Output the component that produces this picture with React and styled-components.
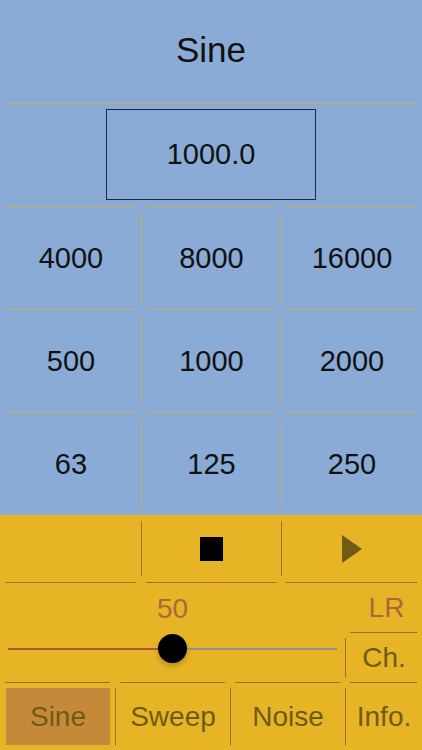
import React from "react";
import styled, { createGlobalStyle } from "styled-components";

const BLUE = "#89abd6";
const YELLOW = "#e6b425";
const TAN = "#c9ad62";
const BROWN = "#ad6839";
const OLIVE = "#6e5b16";

const GlobalStyle = createGlobalStyle`
  html, body {
    margin: 0;
    padding: 0;
    background: ${YELLOW};
  }
  body {
    font-family: "Liberation Sans", Arial, sans-serif;
  }
`;

const frequencies = [
  ["4000", "8000", "16000"],
  ["500", "1000", "2000"],
  ["63", "125", "250"],
];

const tabs = ["Sine", "Sweep", "Noise", "Info."];

const level = 50;
const trackRange = 300;

const App = () => {
  const fill = (level / 100) * trackRange;
  const thumbCenter = 8 + fill + 14.5;

  return (
    <>
      <GlobalStyle />
      <Screen>
        <FreqPanel>
          <Title>Sine</Title>
          <Line />
          <DisplayArea>
            <FreqBox>1000.0</FreqBox>
          </DisplayArea>
          {frequencies.map((row, r) => (
            <GridRow key={r}>
              {row.map((f, i) => (
                <Cell key={f}>
                  <Line />
                  <CellBody $first={i === 0}>{f}</CellBody>
                </Cell>
              ))}
            </GridRow>
          ))}
        </FreqPanel>

        <ControlPanel>
          <GridRow>
            <Cell>
              <TransportBody $first />
              <Line $dark />
            </Cell>
            <Cell>
              <TransportBody>
                <StopIcon />
              </TransportBody>
              <Line $dark />
            </Cell>
            <Cell>
              <TransportBody>
                <svg width="20" height="28" viewBox="0 0 20 28">
                  <polygon points="0,0 20,14 0,28" fill={OLIVE} />
                </svg>
              </TransportBody>
              <Line $dark />
            </Cell>
          </GridRow>

          <SliderRow>
            <LevelArea>
              <ValueLabel style={{ marginLeft: `${thumbCenter - 38}px` }}>
                {level}
              </ValueLabel>
              <Slider>
                <TrackFill style={{ width: `${fill}px` }} />
                <Thumb />
                <TrackRest />
              </Slider>
            </LevelArea>
            <ChannelArea>
              <ChannelValue>LR</ChannelValue>
              <Line $dark />
              <ChannelButton>Ch.</ChannelButton>
            </ChannelArea>
          </SliderRow>

          <TabBar>
            {tabs.map((t, i) => (
              <Tab key={t}>
                <Line $dark />
                <TabBody $first={i === 0}>
                  <TabLabel $active={i === 0}>{t}</TabLabel>
                </TabBody>
              </Tab>
            ))}
          </TabBar>
        </ControlPanel>
      </Screen>
    </>
  );
};

const Screen = styled.div`
  width: 422px;
  height: 750px;
  display: flex;
  flex-direction: column;
  overflow: hidden;
`;

const FreqPanel = styled.section`
  background: ${BLUE};
  display: flex;
  flex-direction: column;
`;

const Title = styled.h1`
  margin: 0;
  height: 103px;
  display: flex;
  align-items: center;
  justify-content: center;
  padding-bottom: 4px;
  box-sizing: border-box;
  font-size: 35px;
  font-weight: normal;
  color: #111;
`;

const Line = styled.div`
  height: 1px;
  margin: 0 5px;
  flex-shrink: 0;
  background: ${({ $dark }) => ($dark ? BROWN : TAN)};
`;

const DisplayArea = styled.div`
  height: 102px;
  padding: 5px 0 6px;
  box-sizing: border-box;
  display: flex;
  justify-content: center;
`;

const FreqBox = styled.div`
  width: 210px;
  height: 91px;
  box-sizing: border-box;
  border: 1px solid #1b2942;
  display: flex;
  align-items: center;
  justify-content: center;
  font-size: 29px;
  color: #111;
`;

const GridRow = styled.div`
  display: grid;
  grid-template-columns: 141px 140px 141px;
`;

const Cell = styled.div`
  display: flex;
  flex-direction: column;
`;

const CellBody = styled.div`
  height: 90px;
  margin: 6px 0;
  border-left: 1px solid ${({ $first }) => ($first ? "transparent" : TAN)};
  display: flex;
  align-items: center;
  justify-content: center;
  font-size: 29px;
  color: #111;
`;

const ControlPanel = styled.section`
  flex: 1;
  background: ${YELLOW};
  display: flex;
  flex-direction: column;
`;

const TransportBody = styled.div`
  height: 55px;
  margin: 6px 0;
  border-left: 1px solid ${({ $first }) => ($first ? "transparent" : BROWN)};
  display: flex;
  align-items: center;
  justify-content: center;
`;

const StopIcon = styled.div`
  width: 23px;
  height: 24px;
  background: #000;
`;

const SliderRow = styled.div`
  height: 99px;
  display: flex;
`;

const LevelArea = styled.div`
  flex: 1;
  display: flex;
  flex-direction: column;
  padding: 10px 8px 0;
`;

const ValueLabel = styled.div`
  width: 60px;
  text-align: center;
  font-size: 28px;
  line-height: 32px;
  color: ${BROWN};
`;

const Slider = styled.div`
  margin-top: 9px;
  height: 29px;
  display: flex;
  align-items: center;
`;

const TrackFill = styled.div`
  height: 2px;
  background: #b25534;
`;

const TrackRest = styled.div`
  flex: 1;
  height: 2px;
  background: #8d9189;
`;

const Thumb = styled.div`
  width: 29px;
  height: 29px;
  border-radius: 50%;
  background: #000;
  box-shadow: 0 3px 5px rgba(0, 0, 0, 0.22);
  flex-shrink: 0;
`;

const ChannelArea = styled.div`
  width: 77px;
  display: flex;
  flex-direction: column;
`;

const ChannelValue = styled.div`
  height: 49px;
  display: flex;
  align-items: center;
  justify-content: center;
  padding-left: 6px;
  font-size: 28px;
  color: ${BROWN};
`;

const ChannelButton = styled.div`
  height: 40px;
  margin: 5px 0 4px;
  border-left: 1px solid ${BROWN};
  display: flex;
  align-items: center;
  justify-content: center;
  font-size: 28px;
  color: ${OLIVE};
`;

const TabBar = styled.nav`
  display: grid;
  grid-template-columns: 115px 115px 115px 77px;
`;

const Tab = styled.div`
  display: flex;
  flex-direction: column;
`;

const TabBody = styled.div`
  height: 57px;
  margin-top: 5px;
  padding: 0 5px;
  border-left: 1px solid ${({ $first }) => ($first ? "transparent" : BROWN)};
  display: flex;
`;

const TabLabel = styled.div`
  flex: 1;
  display: flex;
  align-items: center;
  justify-content: center;
  font-size: 28px;
  color: ${OLIVE};
  white-space: nowrap;
  background: ${({ $active }) => ($active ? "#c6893a" : "transparent")};
`;

export default App;
